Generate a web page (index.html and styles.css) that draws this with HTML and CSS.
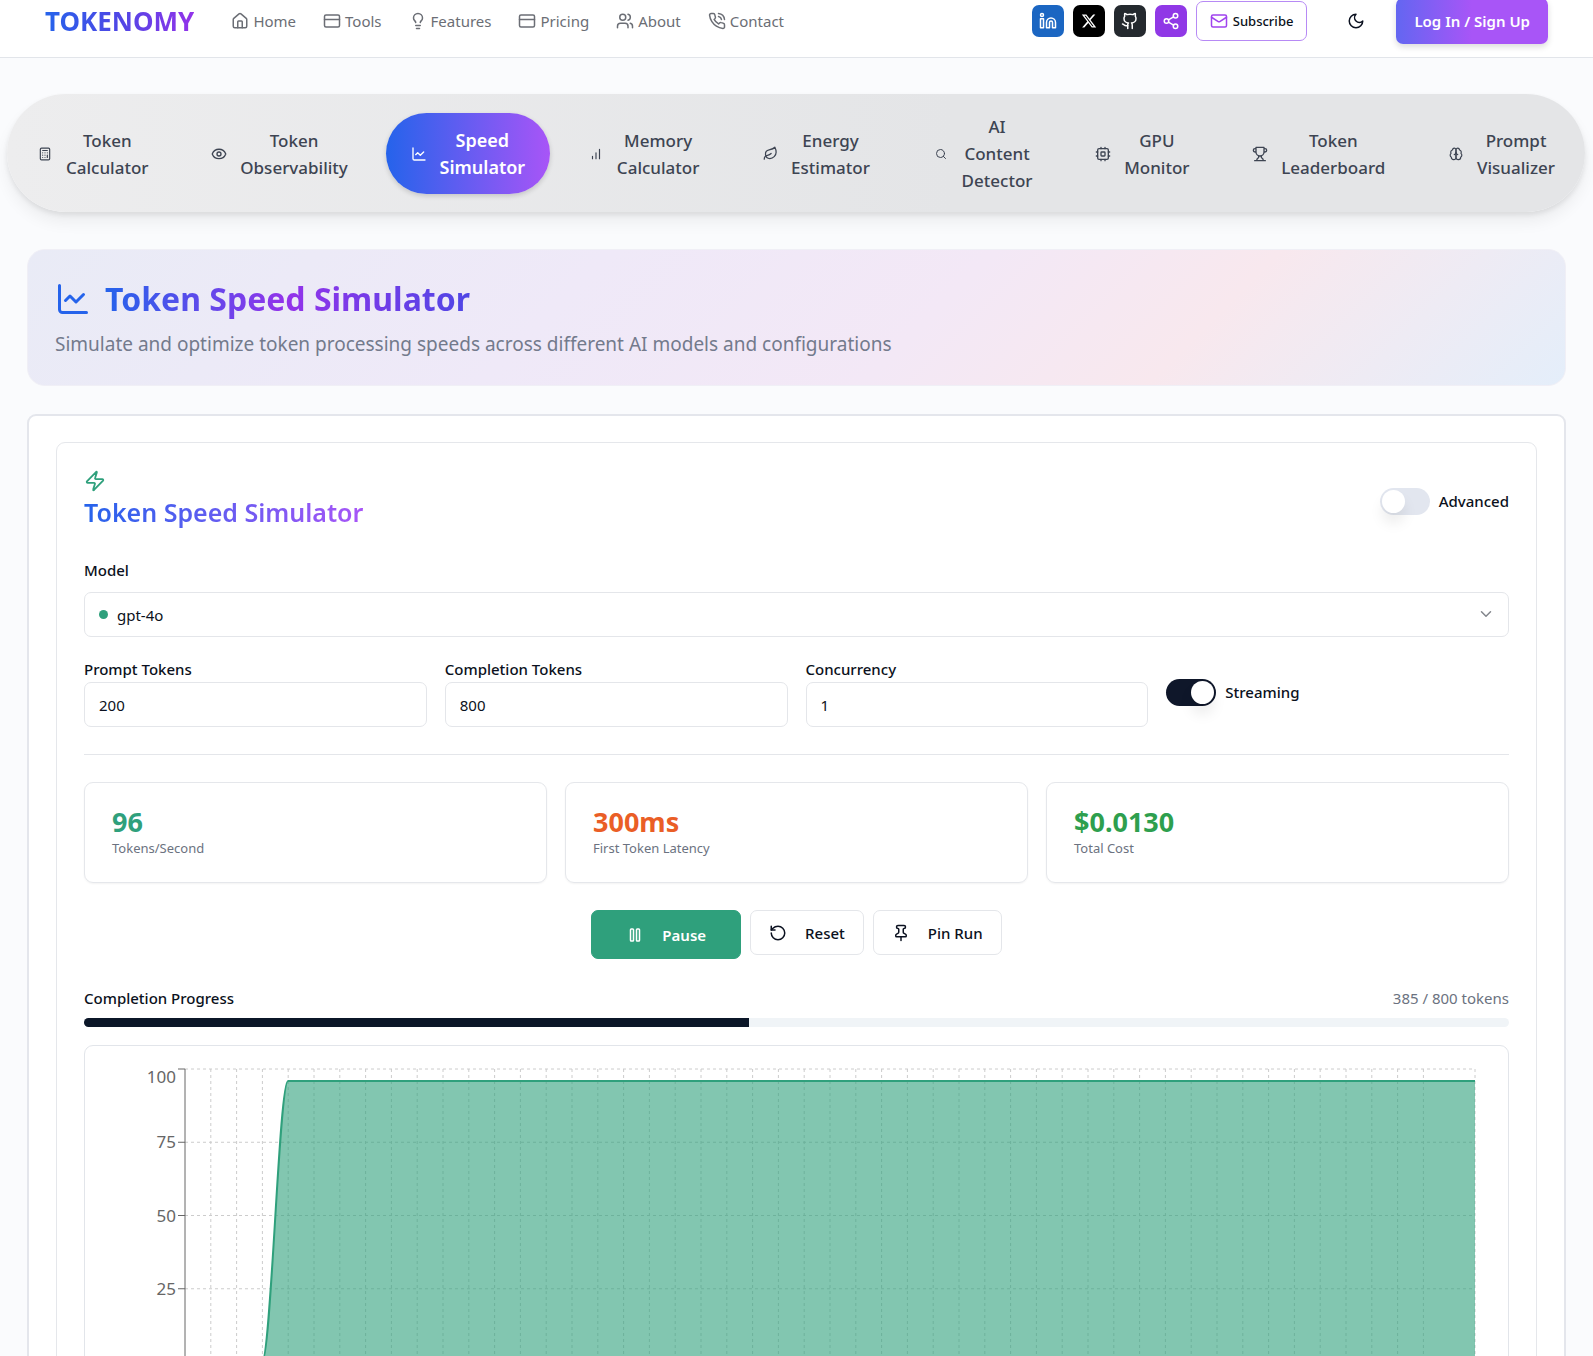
FILE: index.html
```html
<!DOCTYPE html>
<html lang="en">
<head>
    <meta charset="UTF-8">
    <meta name="viewport" content="width=device-width, initial-scale=1.0">
    <title>Tokenomy - Token Speed Simulator</title>
    <link rel="stylesheet" href="styles.css">
</head>
<body>
    <header class="topbar">
        <a href="#" class="logo">TOKENOMY</a>
        <nav class="links">
            <a href="#"><svg class="icon" viewBox="0 0 24 24"><path d="M15 21v-8a1 1 0 0 0-1-1h-4a1 1 0 0 0-1 1v8"/><path d="M3 10a2 2 0 0 1 .7-1.5l7-6a2 2 0 0 1 2.6 0l7 6A2 2 0 0 1 21 10v9a2 2 0 0 1-2 2H5a2 2 0 0 1-2-2z"/></svg>Home</a>
            <a href="#"><svg class="icon" viewBox="0 0 24 24"><rect x="2" y="4" width="20" height="16" rx="2"/><path d="M2 10h20"/></svg>Tools</a>
            <a href="#"><svg class="icon" viewBox="0 0 24 24"><path d="M15 14c.2-1 .7-1.7 1.5-2.5 1-.9 1.5-2.2 1.5-3.5A6 6 0 0 0 6 8c0 1 .2 2.2 1.5 3.5.7.7 1.3 1.5 1.5 2.5"/><path d="M9 18h6M10 22h4"/></svg>Features</a>
            <a href="#"><svg class="icon" viewBox="0 0 24 24"><rect x="2" y="4" width="20" height="16" rx="2"/><path d="M2 10h20"/></svg>Pricing</a>
            <a href="#"><svg class="icon" viewBox="0 0 24 24"><path d="M16 21v-2a4 4 0 0 0-4-4H6a4 4 0 0 0-4 4v2"/><circle cx="9" cy="7" r="4"/><path d="M22 21v-2a4 4 0 0 0-3-3.900M16 3.100a4 4 0 0 1 0 7.800"/></svg>About</a>
            <a href="#"><svg class="icon" viewBox="0 0 24 24"><path d="M22 16.9v3a2 2 0 0 1-2.2 2 19.8 19.8 0 0 1-8.6-3.1 19.5 19.5 0 0 1-6-6 19.8 19.8 0 0 1-3.1-8.7A2 2 0 0 1 4.1 2h3a2 2 0 0 1 2 1.7c.1 1 .4 1.9.7 2.8a2 2 0 0 1-.4 2.1L8.100 9.900a16 16 0 0 0 6 6l1.300-1.300a2 2 0 0 1 2.100-.4c.9.300 1.900.600 2.800.700a2 2 0 0 1 1.700 2z"/><path d="M14 2a9 9 0 0 1 8 8M14 6a5 5 0 0 1 4 4"/></svg>Contact</a>
        </nav>
        <div class="actions">
            <a href="#" class="social linkedin" aria-label="LinkedIn"><svg class="icon" viewBox="0 0 24 24"><path d="M16 8a6 6 0 0 1 6 6v7h-4v-7a2 2 0 0 0-4 0v7h-4v-7a6 6 0 0 1 6-6z"/><rect x="2" y="9" width="4" height="12"/><circle cx="4" cy="4" r="2"/></svg></a>
            <a href="#" class="social x" aria-label="X"><svg class="icon filled" viewBox="0 0 24 24"><path d="M18.244 2.250h3.308l-7.227 8.260 8.502 11.240H16.170l-5.214-6.817L4.990 21.750H1.680l7.730-8.835L1.254 2.250H8.080l4.713 6.231zm-1.161 17.520h1.833L7.084 4.126H5.117z"/></svg></a>
            <a href="#" class="social github" aria-label="GitHub"><svg class="icon" viewBox="0 0 24 24"><path d="M15 22v-4a4.800 4.800 0 0 0-1-3.500c3 0 6-2 6-5.500.080-1.250-.270-2.480-1-3.500.280-1.150.280-2.350 0-3.500 0 0-1 0-3 1.500-2.640-.5-5.360-.5-8 0C6 2 5 2 5 2c-.300 1.150-.300 2.350 0 3.500A5.400 5.400 0 0 0 4 9c0 3.500 3 5.500 6 5.500-.390.490-.680 1.050-.850 1.650-.170.600-.220 1.230-.150 1.850v4"/><path d="M9 18c-4.510 2-5-2-7-2"/></svg></a>
            <a href="#" class="social share" aria-label="Share"><svg class="icon" viewBox="0 0 24 24"><circle cx="18" cy="5" r="3"/><circle cx="6" cy="12" r="3"/><circle cx="18" cy="19" r="3"/><path d="M8.600 13.500l6.800 4M15.400 6.500l-6.800 4"/></svg></a>
            <button class="subscribe"><svg class="icon" viewBox="0 0 24 24"><rect x="2" y="4" width="20" height="16" rx="2"/><path d="M22 7l-9 5.700a2 2 0 0 1-2 0L2 7"/></svg>Subscribe</button>
            <button class="theme" aria-label="Toggle theme"><svg class="icon" viewBox="0 0 24 24"><path d="M12 3a6 6 0 0 0 9 9 9 9 0 1 1-9-9z"/></svg></button>
            <button class="login">Log In / Sign Up</button>
        </div>
    </header>

    <nav class="tabs">
        <a href="#" class="tab"><span class="slot"><svg class="icon i14" viewBox="0 0 24 24"><rect x="4" y="2" width="16" height="20" rx="2"/><path d="M8 6h8M16 14v4M16 10h.01M12 10h.01M8 10h.01M12 14h.01M8 14h.01M12 18h.01M8 18h.01"/></svg></span><span>Token<br>Calculator</span></a>
        <a href="#" class="tab"><span class="slot"><svg class="icon i16" viewBox="0 0 24 24"><path d="M2 12.300a1 1 0 0 1 0-.7 10.800 10.800 0 0 1 20 0 1 1 0 0 1 0 .7 10.800 10.800 0 0 1-20 0"/><circle cx="12" cy="12" r="3"/></svg></span><span>Token<br>Observability</span></a>
        <a href="#" class="tab active"><span class="slot"><svg class="icon i16" viewBox="0 0 24 24"><path d="M3 3v16a2 2 0 0 0 2 2h16"/><path d="M19 9l-5 5-4-4-3 3"/></svg></span><span>Speed<br>Simulator</span></a>
        <a href="#" class="tab"><span class="slot"><svg class="icon i14" viewBox="0 0 24 24"><path d="M12 20V10M18 20V4M6 20v-4"/></svg></span><span>Memory<br>Calculator</span></a>
        <a href="#" class="tab"><span class="slot"><svg class="icon i15" viewBox="0 0 24 24"><path d="M11 20A7 7 0 0 1 9.800 6.100C15.500 5 17 4.500 19 2c1 2 2 4.200 2 8 0 5.500-4.800 10-10 10z"/><path d="M2 21c0-3 1.900-5.400 5.100-6 2.400-.5 4.900-2 5.900-3"/></svg></span><span>Energy<br>Estimator</span></a>
        <a href="#" class="tab"><span class="slot"><svg class="icon i12" viewBox="0 0 24 24"><circle cx="11" cy="11" r="8"/><path d="M21 21l-4.300-4.300"/></svg></span><span>AI<br>Content<br>Detector</span></a>
        <a href="#" class="tab"><span class="slot"><svg class="icon i16" viewBox="0 0 24 24"><rect x="4" y="4" width="16" height="16" rx="2"/><rect x="9" y="9" width="6" height="6" rx="1"/><path d="M9 2v2M15 2v2M9 20v2M15 20v2M2 9h2M2 15h2M20 9h2M20 15h2"/></svg></span><span>GPU<br>Monitor</span></a>
        <a href="#" class="tab"><span class="slot"><svg class="icon i16" viewBox="0 0 24 24"><path d="M6 9H4.500a2.500 2.500 0 0 1 0-5H6M18 9h1.500a2.500 2.500 0 0 0 0-5H18M4 22h16M10 14.700V17c0 .5-.5 1-1 1.200C7.900 18.800 7 20.200 7 22M14 14.700V17c0 .5.5 1 1 1.200 1.200.6 2 2 2 3.800M18 2H6v7a6 6 0 0 0 12 0z"/></svg></span><span>Token<br>Leaderboard</span></a>
        <a href="#" class="tab"><span class="slot"><svg class="icon i14" viewBox="0 0 24 24"><path d="M12 5a3 3 0 1 0-6 .1 4 4 0 0 0-2.500 5.800 4 4 0 0 0 .5 6.600A4 4 0 1 0 12 18z"/><path d="M12 5a3 3 0 1 1 6 .1 4 4 0 0 1 2.500 5.800 4 4 0 0 1-.5 6.600A4 4 0 1 1 12 18z"/><path d="M15 13a4.500 4.500 0 0 1-3-4 4.500 4.500 0 0 1-3 4"/></svg></span><span>Prompt<br>Visualizer</span></a>
    </nav>

    <main>
        <section class="hero">
            <div class="hero-title">
                <svg class="icon" viewBox="0 0 24 24"><path d="M3 3v16a2 2 0 0 0 2 2h16"/><path d="M19 9l-5 5-4-4-3 3"/></svg>
                <h1>Token Speed Simulator</h1>
            </div>
            <p>Simulate and optimize token processing speeds across different AI models and configurations</p>
        </section>

        <section class="panel">
            <div class="card">
                <div class="card-head">
                    <div>
                        <svg class="icon zap" viewBox="0 0 24 24"><path d="M4 14a1 1 0 0 1-.8-1.600l9.900-10.200a.5.5 0 0 1 .9.460l-1.900 6A1 1 0 0 0 13 10h7a1 1 0 0 1 .8 1.600l-9.900 10.200a.5.5 0 0 1-.9-.460l1.900-6A1 1 0 0 0 11 14z"/></svg>
                        <h2>Token Speed Simulator</h2>
                    </div>
                    <div class="toggle">
                        <input type="checkbox" class="switch" id="advanced">
                        <label for="advanced">Advanced</label>
                    </div>
                </div>

                <div class="field model">
                    <label for="model">Model</label>
                    <div class="select-box">
                        <span class="dot"></span>
                        <select id="model">
                            <option>gpt-4o</option>
                        </select>
                        <svg class="icon chevron" viewBox="0 0 24 24"><path d="M6 9l6 6 6-6"/></svg>
                    </div>
                </div>

                <div class="params">
                    <div class="field">
                        <label for="promptTokens">Prompt Tokens</label>
                        <input type="text" id="promptTokens" value="200">
                    </div>
                    <div class="field">
                        <label for="completionTokens">Completion Tokens</label>
                        <input type="text" id="completionTokens" value="800">
                    </div>
                    <div class="field">
                        <label for="concurrency">Concurrency</label>
                        <input type="text" id="concurrency" value="1">
                    </div>
                    <div class="toggle">
                        <input type="checkbox" class="switch" id="streaming" checked>
                        <label for="streaming">Streaming</label>
                    </div>
                </div>

                <hr>

                <div class="stats">
                    <div class="stat"><strong class="green">96</strong><span>Tokens/Second</span></div>
                    <div class="stat"><strong class="orange">300ms</strong><span>First Token Latency</span></div>
                    <div class="stat"><strong class="cost">$0.0130</strong><span>Total Cost</span></div>
                </div>

                <div class="buttons">
                    <button class="btn pause"><svg class="icon" viewBox="0 0 24 24"><rect x="14" y="4" width="4" height="16" rx="1"/><rect x="6" y="4" width="4" height="16" rx="1"/></svg>Pause</button>
                    <button class="btn"><svg class="icon" viewBox="0 0 24 24"><path d="M3 12a9 9 0 1 0 9-9 9.750 9.750 0 0 0-6.740 2.740L3 8"/><path d="M3 3v5h5"/></svg>Reset</button>
                    <button class="btn"><svg class="icon" viewBox="0 0 24 24"><path d="M12 17v5"/><path d="M9 10.800a2 2 0 0 1-1.100 1.800l-1.800.9A2 2 0 0 0 5 15.200V16a1 1 0 0 0 1 1h12a1 1 0 0 0 1-1v-.8a2 2 0 0 0-1.100-1.800l-1.800-.9A2 2 0 0 1 15 10.800V7a1 1 0 0 1 1-1 2 2 0 0 0 0-4H8a2 2 0 0 0 0 4 1 1 0 0 1 1 1z"/></svg>Pin Run</button>
                </div>

                <div class="progress-head">
                    <span>Completion Progress</span>
                    <span class="muted">385 / 800 tokens</span>
                </div>
                <div class="progress" role="progressbar" aria-label="Completion Progress">
                    <div class="progress-fill" style="width: 46.7%"></div>
                </div>

                <div class="chart">
                    <svg viewBox="0 0 1423 350">
                        <g id="grid"></g>
                        <path class="area" d="M177 316C186 316 194 35 203 35H1390V316Z"/>
                        <path class="line" d="M100 316H177C186 316 194 35 203 35H1390"/>
                        <path class="axis" d="M100 23V316H1390"/>
                        <g id="ticks"></g>
                    </svg>
                </div>
            </div>
        </section>
    </main>

    <script>
        let grid = document.getElementById("grid")
        let ticks = document.getElementById("ticks")
        let left = 100, right = 1390, plotTop = 23, plotBottom = 316

        let gridHtml = ""
        for (let i = 1; i <= 50; i++) {
            if (i === 49) continue
            let x = left + (right - left) * i / 50
            gridHtml += `<path d="M${x} ${plotTop}V${plotBottom}"/>`
        }

        let ticksHtml = ""
        for (let v = 25; v <= 100; v += 25) {
            let y = plotBottom - (plotBottom - plotTop) * v / 100
            gridHtml += `<path d="M${left} ${y}H${right}"/>`
            // top label is pushed down so it stays inside the plot
            let textY = v === 100 ? y + 14 : y + 6
            ticksHtml += `<path class="axis" d="M${left - 7} ${y}H${left}"/><text x="${left - 9}" y="${textY}">${v}</text>`
        }

        grid.innerHTML = gridHtml
        ticks.innerHTML = ticksHtml
    </script>
</body>
</html>
```
FILE: styles.css
```css
*{
    margin: 0;
    padding: 0;
    box-sizing: border-box;
}
body{
    background-color: #fafbfd;
    color: #0b1120;
    font-family: "Noto Sans", "Open Sans", sans-serif;
    font-size: 15px;
    line-height: 24px;
}
a{
    color: inherit;
    text-decoration: none;
}
button, input, select{
    font: inherit;
    color: inherit;
}
.icon{
    width: 18px;
    height: 18px;
    flex: none;
    display: block;
    fill: none;
    stroke: currentColor;
    stroke-width: 2;
    stroke-linecap: round;
    stroke-linejoin: round;
}
.icon.filled{
    fill: currentColor;
    stroke: none;
}

/* header */
.topbar{
    display: flex;
    align-items: center;
    margin-top: -2px;
    padding: 0 45px 13px;
    background-color: #fff;
    border-bottom: 1px solid #e2e5ea;
}
.logo{
    font-size: 26px;
    font-weight: 700;
    background: linear-gradient(90deg, #2563eb, #4f46e5 50%, #9333ea);
    -webkit-background-clip: text;
    background-clip: text;
    color: transparent;
}
.links{
    display: flex;
    gap: 27px;
    margin-left: 37px;
    color: #6b6e75;
}
.links a{
    display: flex;
    align-items: center;
    gap: 4px;
}
.actions{
    display: flex;
    align-items: center;
    gap: 9px;
    margin-left: auto;
}
.social{
    display: flex;
    align-items: center;
    justify-content: center;
    width: 32px;
    height: 32px;
    border-radius: 7px;
    color: #fff;
}
.linkedin{
    background-color: #1b66c2;
}
.x{
    background-color: #000;
}
.x .icon{
    width: 16px;
    height: 16px;
}
.github{
    background-color: #24292e;
}
.share{
    background-color: #9038e6;
}
.subscribe{
    display: flex;
    align-items: center;
    gap: 5px;
    height: 40px;
    padding: 0 13px;
    background-color: #fff;
    border: 1px solid #b78af5;
    border-radius: 7px;
    font-size: 13px;
    font-weight: 500;
}
.subscribe .icon{
    color: #a044ee;
}
.theme{
    display: flex;
    align-items: center;
    justify-content: center;
    width: 45px;
    height: 44px;
    margin: 0 9px 0 17px;
    background: none;
    border: none;
}
.login{
    height: 46px;
    padding: 0 18px;
    border: none;
    border-radius: 7px;
    color: #fff;
    font-weight: 600;
    background: linear-gradient(90deg, #6366f1, #a855f7 50%);
    box-shadow: 0 3px 6px rgba(0, 0, 0, 0.14);
}

/* tool tabs */
.tabs{
    display: flex;
    justify-content: space-between;
    margin: 36px 8px 0 7px;
    padding: 19px 5px 18px;
    border-radius: 60px;
    background: linear-gradient(90deg, #ededee, #e4e5e7 60%, #e4e5e7);
    box-shadow: 0 10px 16px rgba(0, 0, 0, 0.06), 0 3px 5px rgba(0, 0, 0, 0.08);
}
.tab{
    display: flex;
    align-items: center;
    gap: 13px;
    padding: 0 25px;
    border-radius: 41px;
    color: #3d4452;
    font-size: 17px;
    font-weight: 500;
    line-height: 27px;
    text-align: center;
}
.tab.active{
    color: #fff;
    font-size: 18px;
    font-weight: 600;
    background: linear-gradient(90deg, #2563eb, #a855f7);
    box-shadow: 0 2px 5px rgba(0, 0, 0, 0.16);
}
.slot{
    display: flex;
    justify-content: center;
    width: 16px;
}
.i12{
    width: 12px;
    height: 12px;
}
.i14{
    width: 14px;
    height: 14px;
}
.i15{
    width: 15px;
    height: 15px;
}
.i16{
    width: 16px;
    height: 16px;
}

/* hero */
main{
    padding: 37px 27px;
}
.hero{
    padding: 27px;
    border: 1px solid #f0eff6;
    border-radius: 18px;
    background: linear-gradient(135deg, #e9ebf6, #efe9f8 35%, #f3e8f6 58%, #f8e8ee 75%, #e4eefa);
}
.hero-title{
    display: flex;
    align-items: center;
    gap: 14px;
    height: 44px;
}
.hero-title .icon{
    width: 36px;
    height: 36px;
    color: #2563eb;
}
.hero h1{
    font-size: 32px;
    line-height: 44px;
    font-weight: 700;
    background: linear-gradient(90deg, #2563eb, #9333ea 50%, #4f46e5);
    -webkit-background-clip: text;
    background-clip: text;
    color: transparent;
}
.hero p{
    margin-top: 9px;
    color: #737a8c;
    font-size: 19px;
    line-height: 28px;
}

/* simulator */
.panel{
    margin-top: 28px;
    padding: 26px 27px;
    background-color: #fff;
    border: 2px solid #e4e6ec;
    border-radius: 9px;
}
.card{
    padding: 27px;
    border: 1px solid #e5e7eb;
    border-radius: 9px;
}
.card-head{
    display: flex;
    align-items: center;
    justify-content: space-between;
}
.zap{
    width: 22px;
    height: 22px;
    color: #2fa07c;
}
.card-head h2{
    font-size: 25px;
    line-height: 40px;
    font-weight: 600;
    background: linear-gradient(90deg, #2563eb, #a855f7);
    -webkit-background-clip: text;
    background-clip: text;
    color: transparent;
}
.toggle{
    display: flex;
    align-items: center;
    gap: 9px;
    font-weight: 500;
}
.switch{
    appearance: none;
    width: 50px;
    height: 27px;
    padding: 2px;
    border-radius: 14px;
    background-color: #e2e6ef;
}
.switch::before{
    content: "";
    display: block;
    width: 23px;
    height: 23px;
    border-radius: 50%;
    background-color: #fff;
    box-shadow: 0 10px 14px rgba(0, 0, 0, 0.08);
}
.switch:checked{
    background-color: #0f172a;
}
.switch:checked::before{
    margin-left: 23px;
}
.field label{
    display: block;
    font-weight: 500;
    line-height: 25px;
}
.field input, .field select{
    display: block;
    width: 100%;
    height: 45px;
    padding: 0 14px;
    background-color: #fff;
    border: 1px solid #e4e6ea;
    border-radius: 7px;
}
.model{
    margin-top: 26px;
}
.select-box{
    position: relative;
    margin-top: 9px;
}
.select-box select{
    appearance: none;
    padding-left: 32px;
}
.dot{
    position: absolute;
    left: 15px;
    top: 18px;
    width: 9px;
    height: 9px;
    border-radius: 50%;
    background-color: #2fa07c;
}
.chevron{
    position: absolute;
    right: 14px;
    top: 13px;
    color: #83868c;
}
.params{
    display: grid;
    grid-template-columns: repeat(4, 1fr);
    gap: 18px;
    margin-top: 20px;
}
hr{
    margin: 27px 0;
    border: none;
    border-top: 1px solid #e4e6ea;
}
.stats{
    display: grid;
    grid-template-columns: repeat(3, 1fr);
    gap: 18px;
}
.stat{
    padding: 23px 27px;
    border: 1px solid #e5e7eb;
    border-radius: 9px;
    box-shadow: 0 1px 2px rgba(0, 0, 0, 0.05);
}
.stat strong{
    display: block;
    font-size: 27px;
    line-height: 31px;
}
.stat span{
    display: block;
    color: #6b7280;
    font-size: 13px;
    line-height: 22px;
}
.green{
    color: #2fa07c;
}
.orange{
    color: #ea5e26;
}
.cost{
    color: #2e9f4e;
}
.buttons{
    display: flex;
    justify-content: center;
    align-items: flex-start;
    gap: 9px;
    margin-top: 27px;
}
.btn{
    display: flex;
    align-items: center;
    gap: 18px;
    height: 45px;
    padding: 0 18px;
    background-color: #fff;
    border: 1px solid #e4e6ea;
    border-radius: 7px;
    font-weight: 500;
}
.pause{
    height: 49px;
    padding: 0 34px;
    background-color: #2fa07c;
    border-color: #2fa07c;
    color: #fff;
    font-weight: 600;
}
.progress-head{
    display: flex;
    justify-content: space-between;
    margin-top: 27px;
    font-weight: 500;
}
.muted{
    color: #6b7280;
    font-weight: 400;
}
.progress{
    height: 9px;
    margin-top: 8px;
    border-radius: 5px;
    background-color: #f0f4f7;
    overflow: hidden;
}
.progress-fill{
    height: 100%;
    background-color: #0b1628;
}

/* chart */
.chart{
    margin-top: 18px;
    border: 1px solid #e2e5ea;
    border-radius: 9px;
}
.chart svg{
    display: block;
    width: 100%;
}
#grid path{
    stroke: #ccc;
    stroke-dasharray: 3 3;
}
.area{
    fill: #2fa07c;
    fill-opacity: 0.6;
}
.line{
    fill: none;
    stroke: #2fa07c;
    stroke-width: 2;
}
.axis{
    fill: none;
    stroke: #666;
}
#ticks text{
    fill: #666;
    font-size: 17px;
    text-anchor: end;
}
```
